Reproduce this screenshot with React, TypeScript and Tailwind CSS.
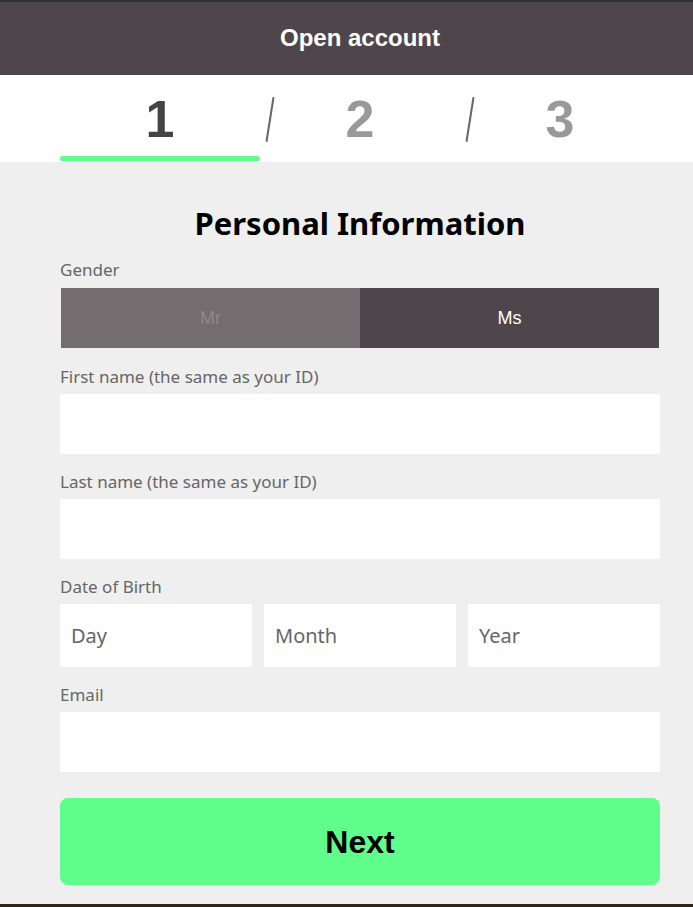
const steps = ["1", "2", "3"];
const arial = { fontFamily: "'Liberation Sans', Arial, sans-serif" };

function Label({ children }: { children: string }) {
  return <p className="text-[17px] leading-[22px] text-[#666] mb-[6px]">{children}</p>;
}

export default function App() {
  return (
    <div
      className="w-[693px] h-[907px] bg-[#efefef] flex flex-col overflow-hidden"
      style={{ fontFamily: "'Noto Sans', Lato, sans-serif" }}
    >
      {/* Header */}
      <div className="border-t-2 border-[#2b3034] h-[75px] bg-[#4f464b] flex items-center justify-center pl-[60px] pr-[33px]">
        <h1 className="text-white text-[24px] font-bold pb-[1px]" style={arial}>
          Open account
        </h1>
      </div>

      {/* Steps */}
      <div className="h-[87px] bg-white flex pl-[60px] pr-[33px]">
        {steps.map((s, i) => (
          <div key={s} className="relative w-[200px] flex items-start justify-center pt-[19px]">
            <span
              className={`text-[52px] leading-[50px] font-bold ${i === 0 ? "text-[#444]" : "text-[#999]"}`}
              style={arial}
            >
              {s}
            </span>
            {i < 2 && (
              <span className="absolute right-[-11px] top-[22px] w-[2px] h-[45px] bg-[#666] rotate-[9deg]" />
            )}
            {i === 0 && (
              <span className="absolute left-0 bottom-[1px] w-[200px] h-[5px] rounded-full bg-[#5ffe8a]" />
            )}
          </div>
        ))}
      </div>

      {/* Form */}
      <div className="pl-[60px] pr-[33px] flex-1 flex flex-col">
        <h2 className="mt-[42px] text-center text-[31px] leading-[38px] font-bold text-black">
          Personal Information
        </h2>

        <div className="mt-[17px]">
          <p className="text-[17px] leading-[22px] text-[#666] mb-[7px]">Gender</p>
          <div className="flex h-[60px] mx-[1px]">
            <div className="flex-1 bg-[#736d70] text-[#8f898c] text-[18px] flex items-center justify-center" style={arial}>
              Mr
            </div>
            <div className="flex-1 bg-[#4f464b] text-white text-[18px] flex items-center justify-center" style={arial}>
              Ms
            </div>
          </div>
        </div>

        <div className="mt-[18px]">
          <Label>First name (the same as your ID)</Label>
          <div className="h-[60px] bg-white" />
        </div>

        <div className="mt-[17px]">
          <Label>Last name (the same as your ID)</Label>
          <div className="h-[60px] bg-white" />
        </div>

        <div className="mt-[17px]">
          <Label>Date of Birth</Label>
          <div className="grid grid-cols-3 gap-[12px]">
            {["Day", "Month", "Year"].map((p) => (
              <div key={p} className="h-[63px] bg-white flex items-center px-[11px] text-[20px] text-[#666]">
                {p}
              </div>
            ))}
          </div>
        </div>

        <div className="mt-[17px]">
          <Label>Email</Label>
          <div className="h-[60px] bg-white" />
        </div>

        <button className="mt-[26px] h-[87px] w-full rounded-[8px] bg-[#5ffe8a] text-black text-[32px] font-bold" style={arial}>
          Next
        </button>
      </div>

      <div className="h-[3px] bg-[#2f2619]" />
    </div>
  );
}
